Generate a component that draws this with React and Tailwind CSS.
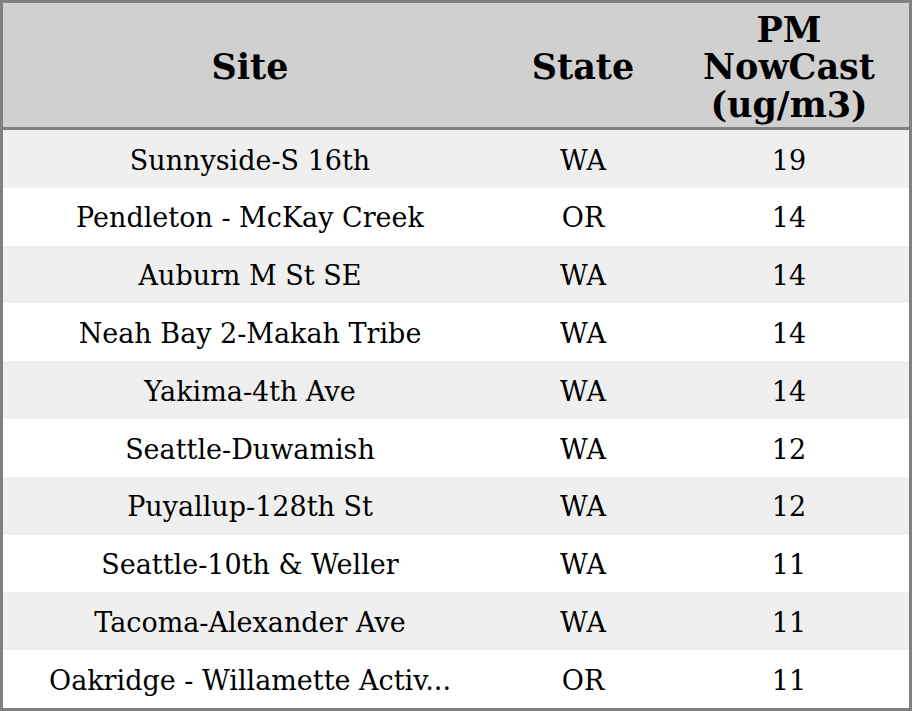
export default function App() {
  const rows = [
    ["Sunnyside-S 16th", "WA", "19"],
    ["Pendleton - McKay Creek", "OR", "14"],
    ["Auburn M St SE", "WA", "14"],
    ["Neah Bay 2-Makah Tribe", "WA", "14"],
    ["Yakima-4th Ave", "WA", "14"],
    ["Seattle-Duwamish", "WA", "12"],
    ["Puyallup-128th St", "WA", "12"],
    ["Seattle-10th & Weller", "WA", "11"],
    ["Tacoma-Alexander Ave", "WA", "11"],
    ["Oakridge - Willamette Activ...", "OR", "11"],
  ];

  return (
    <div
      className="w-[912px] h-[711px] border-[3px] border-[#808080] flex flex-col bg-white text-black"
      style={{ fontFamily: '"DejaVu Serif", serif' }}
    >
      <div className="h-[127px] shrink-0 pt-[4px] bg-[#d0d0d0] border-b-[3px] border-[#808080] flex items-center text-[35px] font-bold leading-[37.5px] text-center">
        <div className="w-[494px]">Site</div>
        <div className="w-[172px]">State</div>
        <div className="flex-1">
          PM
          <br />
          NowCast
          <br />
          (ug/m3)
        </div>
      </div>
      <div className="flex-1 flex flex-col">
        {rows.map((r, i) => (
          <div
            key={i}
            className={`flex-1 flex items-center pt-[4px] text-center text-[27px] ${
              i % 2 === 0 ? "bg-[#efefef]" : "bg-white"
            }`}
          >
            <div className="w-[494px]">{r[0]}</div>
            <div className="w-[172px]">{r[1]}</div>
            <div className="flex-1">{r[2]}</div>
          </div>
        ))}
      </div>
    </div>
  );
}
